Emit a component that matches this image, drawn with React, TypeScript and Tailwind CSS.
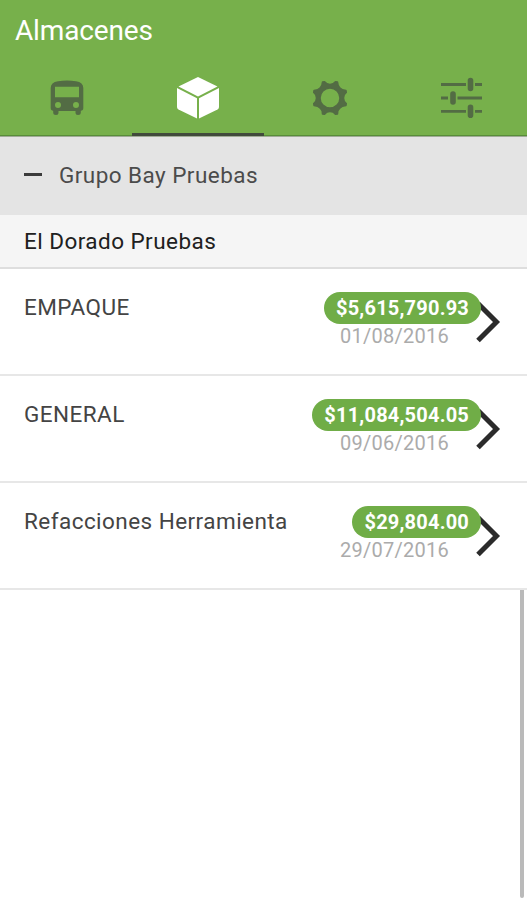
const rows = [
  { name: "EMPAQUE", amount: "$5,615,790.93", date: "01/08/2016" },
  { name: "GENERAL", amount: "$11,084,504.05", date: "09/06/2016" },
  { name: "Refacciones Herramienta", amount: "$29,804.00", date: "29/07/2016" },
];

function BusIcon() {
  return (
    <svg className="ml-[2px]" width="34" height="36" viewBox="0 0 34 36" fill="#536c44">
      <path
        fillRule="evenodd"
        d="M8 1.300Q17-.3 26 1.300Q33.300 2.500 33.300 8V28Q33.300 30.800 30.800 30.800V32.500Q30.800 35 28 35Q25.500 35 25.500 32.500V31H8.500V32.500Q8.500 35 6 35Q3.200 35 3.200 32.500V30.800Q.7 30.800 .7 28V8Q.7 2.500 8 1.300ZM5 6.800V17.300H29V6.800ZM8 22A3 3 0 1 0 8 28A3 3 0 1 0 8 22ZM26 22A3 3 0 1 0 26 28A3 3 0 1 0 26 22Z"
      />
    </svg>
  );
}

function CubeIcon() {
  return (
    <svg width="44" height="44" viewBox="0 0 44 44" fill="#fff">
      <path d="M22 1L41.500 10.500L22 20.500L2.500 10.500Z" />
      <path d="M1 12L21 22.300V42.500L2.500 33.500Q1 32.500 1 31Z" />
      <path d="M43 12L23 22.300V42.500L41.500 33.500Q43 32.500 43 31Z" />
    </svg>
  );
}

function GearIcon() {
  return (
    <svg className="ml-[2px]" width="36" height="36" viewBox="-18 -18 36 36" fill="#536c44">
      <path
        fillRule="evenodd"
        stroke="#536c44"
        strokeWidth="1.500"
        strokeLinejoin="round"
        d="M-7.500-16L-5.500-16.300Q-3.500-13.500 0-13.500Q3.500-13.500 5.500-16.300L7.500-16Q7.800-11.500 10-10Q11.500-7.800 16-7.500L16.300-5.500Q13.500-3.500 13.500 0Q13.500 3.500 16.300 5.500L16 7.500Q11.500 7.800 10 10Q7.800 11.500 7.500 16L5.500 16.300Q3.500 13.500 0 13.500Q-3.500 13.500-5.500 16.300L-7.500 16Q-7.800 11.500-10 10Q-11.500 7.800-16 7.500L-16.300 5.500Q-13.500 3.500-13.500 0Q-13.500-3.500-16.300-5.500L-16-7.500Q-11.500-7.800-10-10Q-7.800-11.500-7.500-16ZM0-10A10 10 0 1 0 0 10A10 10 0 1 0 0-10Z"
      />
    </svg>
  );
}

function SlidersIcon() {
  return (
    <svg width="42" height="42" viewBox="0 0 42 42" fill="none" stroke="#536c44">
      <path strokeWidth="2.800" d="M1 7.500H26M35 7.500H42M1 21H8M17.500 21H42M1 34.300H26M35 34.300H42" />
      <path strokeWidth="5.600" strokeLinecap="round" d="M30.500 3.500V11.500M13 17V25M30.500 30.300V38.300" />
    </svg>
  );
}

function Chevron() {
  return (
    <svg className="absolute left-[474px] top-[31px]" width="27" height="44" viewBox="0 0 27 44" fill="none">
      <path d="M4 3.500L22.500 22L4 40.500" stroke="#2b2b2b" strokeWidth="5" />
    </svg>
  );
}

export default function App() {
  return (
    <div className="flex h-[900px] w-[527px] flex-col overflow-hidden bg-white font-['Roboto',sans-serif]">
      <header className="flex h-[137px] flex-col border-b border-[#a0ab97] bg-[#77b04b]">
        <h1 className="h-[62px] pl-[15px] pt-[15px] text-[28px] leading-8 tracking-[-0.15px] text-white">Almacenes</h1>
        <nav className="grid flex-1 grid-cols-4">
          <div className="flex justify-center border-b border-[#588d39] pt-[18px]"><BusIcon /></div>
          <div className="flex justify-center border-b-[3px] border-[#414a3c] pt-[14px]"><CubeIcon /></div>
          <div className="flex justify-center border-b border-[#588d39] pt-[18px]"><GearIcon /></div>
          <div className="flex justify-center border-b border-[#588d39] pt-[15px]"><SlidersIcon /></div>
        </nav>
      </header>
      <div className="flex h-[78px] items-center bg-[#e4e4e4] pb-[3px] pl-6 text-[22.5px] leading-7 tracking-[0.45px] text-[#4b4b4b]">
        <span className="mr-[17px] h-[3px] w-[18px] bg-[#3b3b3b]" />
        <span>Grupo Bay Pruebas</span>
      </div>
      <div className="h-[54px] border-b-2 border-[#dedede] bg-[#f5f5f5] pl-6 pt-[12px] text-[22.5px] leading-7 tracking-[0.45px] text-[#202020]">
        El Dorado Pruebas
      </div>
      {rows.map((row) => (
        <div key={row.name} className="relative flex h-[107px] justify-between border-b-2 border-[#e7e7e7] pl-6 pr-[46px]">
          <span className="pt-[24px] text-[22.5px] leading-7 tracking-[0.45px] text-[#444]">{row.name}</span>
          <Chevron />
          <div className="relative flex flex-col items-end pt-[23px]">
            <span className="flex h-8 items-center rounded-full bg-[#70ad47] px-3 text-[20px] font-bold tracking-[0.2px] text-white">{row.amount}</span>
            <span className="mr-[32px] text-[20px] leading-6 tracking-[0.25px] text-[#ababab]">{row.date}</span>
          </div>
        </div>
      ))}
      <div className="mr-[3px] h-[308px] w-1 self-end rounded-b-sm bg-[#bababa]" />
    </div>
  );
}
